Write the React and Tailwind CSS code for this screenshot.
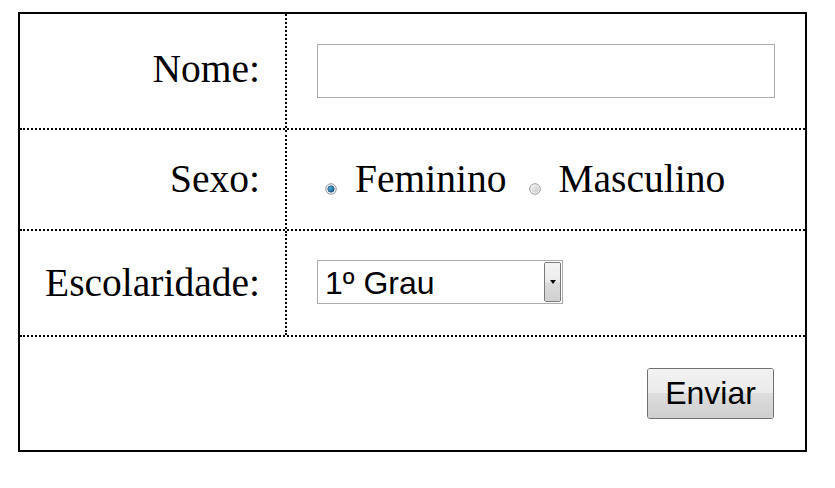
import { useState } from 'react';

const serif = { fontFamily: '"Liberation Serif", "Times New Roman", serif' };
const sans = { fontFamily: '"Liberation Sans", Arial, sans-serif' };

function Radio({ checked }) {
    return (
        <svg width="12" height="12" viewBox="0 0 12 12" className="shrink-0 mt-[18px]">
            <defs>
                <linearGradient id="rg-on" x1="0" y1="0" x2="1" y2="1">
                    <stop offset="0" stopColor="#6cc3ef" />
                    <stop offset="1" stopColor="#0b4f86" />
                </linearGradient>
                <linearGradient id="rg-off" x1="0" y1="0" x2="1" y2="1">
                    <stop offset="0" stopColor="#f2f2f2" />
                    <stop offset="1" stopColor="#c9c9c9" />
                </linearGradient>
            </defs>
            <circle cx="6" cy="6" r="5.3" fill="#f4f4f4" stroke="#9a9a9a" strokeWidth="1" />
            {checked ? (
                <circle cx="6" cy="6" r="3.2" fill="url(#rg-on)" stroke="#1a4c78" strokeWidth="0.8" />
            ) : (
                <circle cx="6" cy="6" r="3.8" fill="url(#rg-off)" />
            )}
        </svg>
    );
}

export default function App() {
    const [sexo, setSexo] = useState('F');

    return (
        <div className="w-[835px] h-[488px] bg-white pt-[12px] pl-[18px]" style={serif}>
            <div className="w-[789px] h-[440px] border-2 border-black flex flex-col text-[39.5px] text-black leading-none">
                {/* Nome */}
                <div className="flex h-[116px] border-b-2 border-dotted border-black">
                    <div className="w-[267px] border-r-2 border-dotted border-black flex items-center justify-end pr-[25px] pb-[2px]">
                        Nome:
                    </div>
                    <div className="flex-1 flex items-center pl-[30px] pb-[1px]">
                        <input type="text"
                            className="w-[458px] h-[54px] border border-[#ababab] bg-white outline-none px-1 text-[32px]"
                            style={sans} />
                    </div>
                </div>

                {/* Sexo */}
                <div className="flex h-[101px] border-b-2 border-dotted border-black">
                    <div className="w-[267px] border-r-2 border-dotted border-black flex items-center justify-end pr-[25px] pt-[1px]">
                        Sexo:
                    </div>
                    <div className="flex-1 flex items-center pl-[38px] pt-[1px]">
                        <label className="flex items-center cursor-pointer" onClick={() => setSexo('F')}>
                            <Radio checked={sexo === 'F'} />
                            <span className="ml-[18px]">Feminino</span>
                        </label>
                        <label className="flex items-center cursor-pointer ml-[23px]" onClick={() => setSexo('M')}>
                            <Radio checked={sexo === 'M'} />
                            <span className="ml-[17px]">Masculino</span>
                        </label>
                    </div>
                </div>

                {/* Escolaridade */}
                <div className="flex h-[106px] border-b-2 border-dotted border-black">
                    <div className="w-[267px] border-r-2 border-dotted border-black flex items-center justify-end pr-[25px] pt-[1px]">
                        Escolaridade:
                    </div>
                    <div className="flex-1 flex items-center pl-[30px] pb-[2px]">
                        <div className="w-[246px] h-[44px] border border-[#ababab] bg-white flex items-center justify-between pl-[7px] pr-[1px] text-[32px]"
                            style={sans}>
                            <span className="pt-[1px]">1º Grau</span>
                            <div className="w-[17px] h-[40px] border border-[#7a7a7a] rounded-[2px] flex flex-col overflow-hidden relative">
                                <div className="flex-1 bg-gradient-to-b from-[#f4f4f4] to-[#ebebeb]" />
                                <div className="flex-1 bg-gradient-to-b from-[#dddddd] to-[#d0d0d0]" />
                                <span className="absolute inset-0 flex items-center justify-center">
                                    <span className="w-0 h-0 border-l-[3.5px] border-r-[3.5px] border-t-[4px] border-l-transparent border-r-transparent border-t-black" />
                                </span>
                            </div>
                        </div>
                    </div>
                </div>

                {/* Enviar */}
                <div className="flex-1 flex items-center justify-end pr-[31px] pb-[1px]">
                    <button
                        className="w-[127px] h-[51px] border border-[#707070] rounded-[3px] flex flex-col overflow-hidden relative text-[32px]"
                        style={sans}>
                        <div className="h-1/2 w-full bg-gradient-to-b from-[#f2f2f2] to-[#ebebeb]" />
                        <div className="h-1/2 w-full bg-gradient-to-b from-[#dddddd] to-[#cfcfcf]" />
                        <span className="absolute inset-0 flex items-center justify-center">Enviar</span>
                    </button>
                </div>
            </div>
        </div>
    );
}
